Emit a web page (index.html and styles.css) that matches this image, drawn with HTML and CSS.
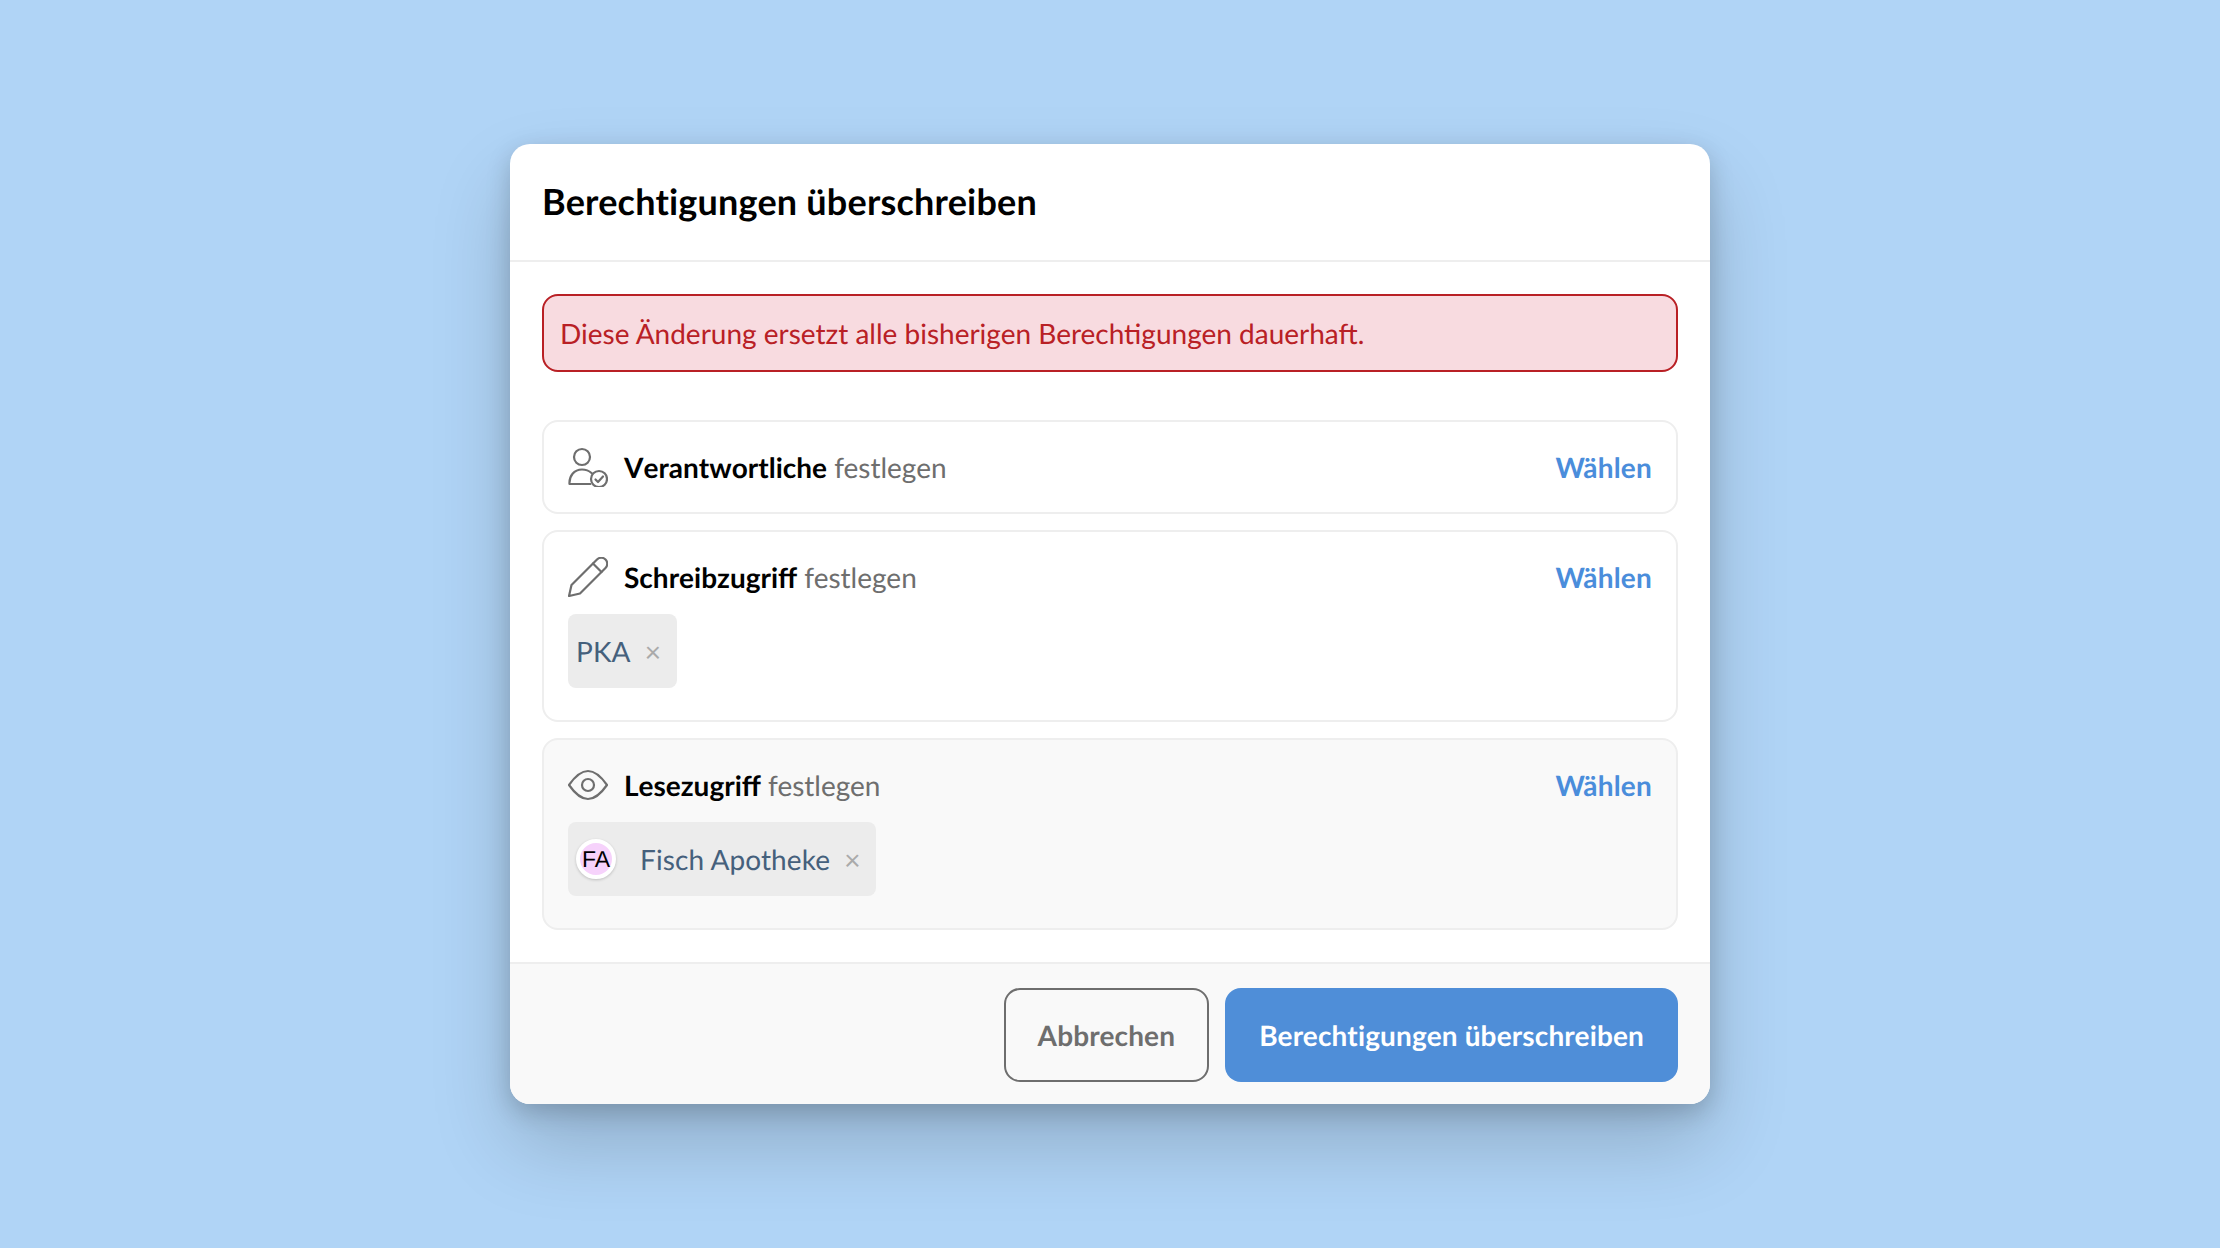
FILE: index.html
```html
<!DOCTYPE html>
<html lang="de">
<head>
    <meta charset="UTF-8">
    <meta name="viewport" content="width=device-width, initial-scale=1.0">
    <title>Berechtigungen überschreiben</title>
    <link rel="stylesheet" href="styles.css">
</head>
<body>
    <div class="modal">
        <div class="modal-header">
            <h1>Berechtigungen überschreiben</h1>
        </div>

        <div class="modal-body">
            <div class="alert">Diese Änderung ersetzt alle bisherigen Berechtigungen dauerhaft.</div>

            <div class="cards">
                <div class="card">
                    <div class="card-row">
                        <svg class="icon" viewBox="0 0 40 40">
                            <circle cx="14" cy="10" r="8"/>
                            <path d="M22.500 37H1.500C1 29 6 22.500 14 22.500c4 0 7 1.200 9.500 3.500"/>
                            <circle cx="31" cy="32" r="8"/>
                            <path d="M27.500 32.500l2.500 2.500 5-5.500"/>
                        </svg>
                        <span class="card-title"><b>Verantwortliche</b> festlegen</span>
                        <a class="pick" href="#">Wählen</a>
                    </div>
                </div>

                <div class="card">
                    <div class="card-row">
                        <svg class="icon" viewBox="0 0 40 40">
                            <path d="M1 39L3.500 28 29 2.500a6 6 0 0 1 8.500 8.500L12 36.500z"/>
                            <path d="M25 6.500l8.500 8.500"/>
                        </svg>
                        <span class="card-title"><b>Schreibzugriff</b> festlegen</span>
                        <a class="pick" href="#">Wählen</a>
                    </div>
                    <div class="chips">
                        <span class="chip">PKA<span class="chip-x">×</span></span>
                    </div>
                </div>

                <div class="card card-muted">
                    <div class="card-row">
                        <svg class="icon" viewBox="0 0 40 40">
                            <path d="M1 20C8 10 14 6 20 6s12 4 19 14c-7 10-13 14-19 14S8 30 1 20z"/>
                            <circle cx="20" cy="20" r="6"/>
                        </svg>
                        <span class="card-title"><b>Lesezugriff</b> festlegen</span>
                        <a class="pick" href="#">Wählen</a>
                    </div>
                    <div class="chips">
                        <span class="chip"><span class="avatar">FA</span>Fisch Apotheke<span class="chip-x">×</span></span>
                    </div>
                </div>
            </div>
        </div>

        <div class="modal-footer">
            <button class="btn btn-cancel">Abbrechen</button>
            <button class="btn btn-primary">Berechtigungen überschreiben</button>
        </div>
    </div>
</body>
</html>
```

FILE: styles.css
```css
body {
    margin: 0;
    height: 1248px;
    background: #b0d4f6;
    font-family: Lato, sans-serif;
    text-rendering: geometricPrecision;
    display: flex;
    align-items: center;
    justify-content: center;
    overflow: hidden;
}
.modal {
    width: 1200px;
    height: 960px;
    background: #fff;
    border-radius: 20px;
    overflow: hidden;
    display: flex;
    flex-direction: column;
    box-shadow: 0 8px 24px rgba(0, 0, 0, 0.18), 0 40px 80px rgba(0, 0, 0, 0.18);
}
.modal-header {
    box-sizing: border-box;
    flex: none;
    height: 118px;
    padding: 0 32px 2px;
    display: flex;
    align-items: center;
    border-bottom: 2px solid #eee;
}
h1 {
    margin: 0;
    font-size: 36px;
    font-weight: 700;
    letter-spacing: 0.2px;
    color: #000;
}
.modal-body {
    flex: 1;
    padding: 32px;
}
.alert {
    height: 74px;
    padding: 0 16px;
    display: flex;
    align-items: center;
    background: #f8dbe0;
    border: 2px solid #b92025;
    border-radius: 16px;
    color: #b92025;
    font-size: 28px;
}
.cards {
    margin-top: 48px;
    display: flex;
    flex-direction: column;
    gap: 16px;
}
.card {
    padding: 24px;
    border: 2px solid #eee;
    border-radius: 16px;
}
.card-muted {
    background: #f9f9f9;
}
.card-row {
    height: 42px;
    display: flex;
    align-items: center;
}
.icon {
    width: 40px;
    height: 40px;
    margin-right: 16px;
    fill: none;
    stroke: #6e6e6e;
    stroke-width: 2.2;
    stroke-linejoin: round;
    stroke-linecap: round;
}
.card-title {
    flex: 1;
    font-size: 28px;
    color: #6e6e6e;
}
.card-title b {
    font-kerning: none;
    color: #000;
}
.pick {
    color: #4a8ddb;
    font-size: 28px;
    font-weight: 700;
    letter-spacing: 0.2px;
    text-decoration: none;
}
.chips {
    margin: 16px 0 8px;
    display: flex;
}
.chip {
    height: 74px;
    padding: 0 16px 0 8px;
    display: flex;
    align-items: center;
    background: #ececec;
    border-radius: 8px;
    color: #45607c;
    font-size: 28px;
    letter-spacing: 0.1px;
}
.chip-x {
    margin-left: 14px;
    color: #aaa;
}
.avatar {
    box-sizing: border-box;
    width: 40px;
    height: 40px;
    margin-right: 24px;
    padding-top: 1px;
    display: flex;
    align-items: center;
    justify-content: center;
    background: #f6d2fb;
    border: 4px solid #fff;
    border-radius: 50%;
    box-shadow: 0 1px 3px rgba(0, 0, 0, 0.2);
    color: #000;
    font-family: "Liberation Sans", sans-serif;
    font-size: 23px;
    letter-spacing: 0;
}
.modal-footer {
    box-sizing: border-box;
    flex: none;
    height: 142px;
    padding: 24px 32px 0;
    display: flex;
    justify-content: flex-end;
    gap: 16px;
    background: #f9f9f9;
    border-top: 2px solid #eee;
}
.btn {
    height: 94px;
    padding: 0 32px;
    border: 2px solid transparent;
    border-radius: 16px;
    font-family: Lato, sans-serif;
    font-size: 28px;
    font-weight: 700;
    letter-spacing: 0.15px;
    text-rendering: geometricPrecision;
}
.btn-cancel {
    background: #f9f9f9;
    border-color: #6e6e6e;
    color: #6e6e6e;
}
.btn-primary {
    background: #4f8ed8;
    color: #fff;
}
```
